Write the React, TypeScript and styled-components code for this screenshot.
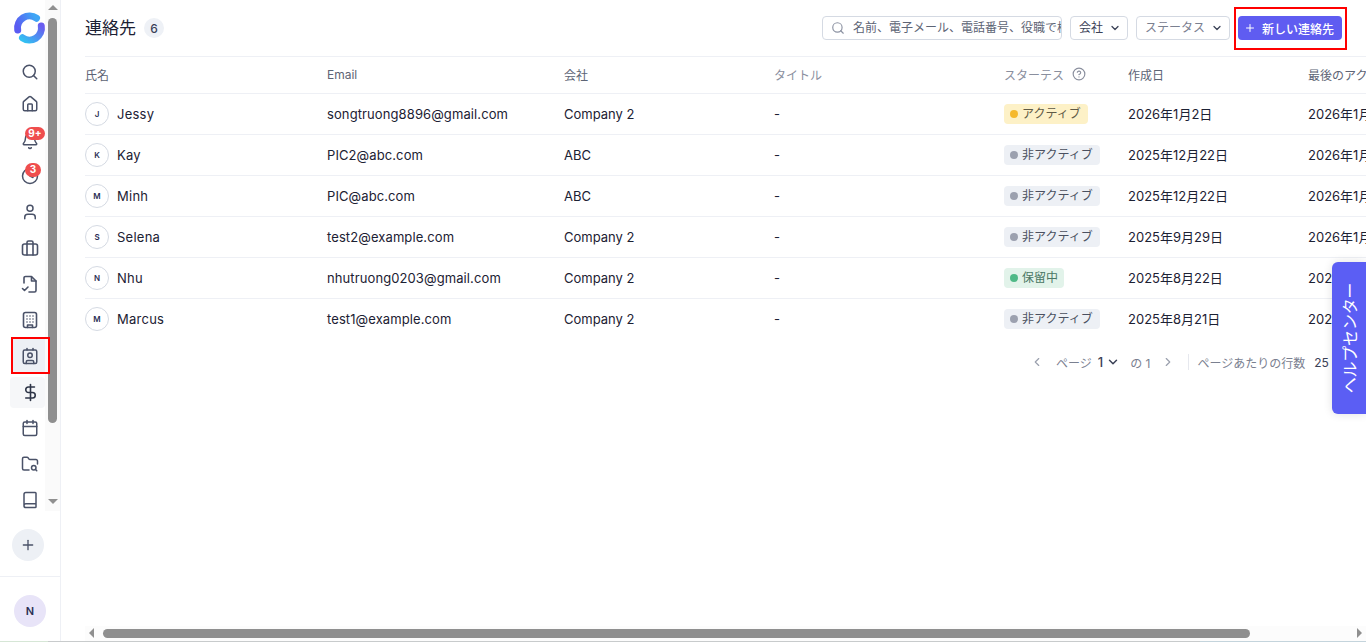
import React from "react";
import styled, { createGlobalStyle } from "styled-components";
import { Search, House, Bell, Clock, User, Calendar, FolderSearch, Book, Plus, DollarSign, Contact, ChevronDown, ChevronLeft, ChevronRight, CircleHelp } from "lucide-react";

const Global = createGlobalStyle`
  html, body { margin: 0; padding: 0; height: 100%; overflow: hidden; background: #fff; }
  body { font-family: Inter, "Noto Sans CJK JP", sans-serif; color: #1c2133; }
  * { box-sizing: border-box; }
`;

const Page = styled.div`
  position: relative; display: flex; width: 1366px; height: 642px; overflow: hidden; background: #fff;
  &::after { content: ""; position: absolute; left: 0; right: 0; bottom: 0; height: 1px;
    background: linear-gradient(90deg, #d6e6d6 0 48px, #c8cbcc 48px 1200px, #c4d4dc 1200px); }
`;
const Sidebar = styled.aside`
  position: relative; flex: 0 0 61px; height: 100%; border-right: 1px solid #eef0f5;
  display: flex; flex-direction: column;
`;
const LogoWrap = styled.div`
  height: 56px; padding: 12px 0 0 13px;
`;
const Nav = styled.nav`
  display: flex; flex-direction: column; align-items: flex-start; height: 462px; padding-left: 12px;
`;
const NavItem = styled.div<{ $h?: number; $mt?: number; $state?: "active" | "hover" }>`
  position: relative; flex: none; width: 36px; height: ${(p) => p.$h ?? 36}px; margin-top: ${(p) => p.$mt ?? 0}px;
  display: flex; align-items: center; justify-content: center; border-radius: 4px; color: #4a5268;
  background: ${(p) => (p.$state === "active" ? "#edf0f5" : "transparent")};
  ${(p) =>
    p.$state === "active"
      ? `&::after { content: ""; position: absolute; z-index: 2; left: -1px; right: -2px; top: -1px; bottom: 0; border: 2px solid #f00; }`
      : ""}
  ${(p) =>
    p.$state === "hover"
      ? `isolation: isolate; color: #2f3648;
         &::before { content: ""; position: absolute; z-index: -1; left: -2px; right: 3px; top: 3px; bottom: 2px; border-radius: 4px; background: #f6f7f9; }`
      : ""}
`;
const CountBadge = styled.span<{ $wide?: boolean }>`
  position: absolute; left: 13px; top: ${(p) => (p.$wide ? "4px" : "5px")};
  height: ${(p) => (p.$wide ? "13px" : "14px")}; min-width: ${(p) => (p.$wide ? "20px" : "16px")};
  border-radius: 8px; background: #ef4e4e; color: #fff; font-size: 10px; font-weight: 700; line-height: 13px; text-align: center;
`;
const AddButton = styled.div`
  width: 32px; height: 32px; border-radius: 50%; background: #edf0f5; color: #4a5268;
  margin: 11px 0 0 12px; display: flex; align-items: center; justify-content: center;
`;
const Divider = styled.div`
  height: 1px; background: #eef0f5; margin-top: 15px;
`;
const UserAvatar = styled.div`
  width: 32px; height: 32px; border-radius: 50%; background: #e8e4f8; color: #2b2f55;
  margin: 18px 0 0 14px; display: flex; align-items: center; justify-content: center; font-size: 11px; font-weight: 600;
`;
const VTrack = styled.div`
  position: absolute; left: 45px; top: 0; width: 15px; height: 511px; background: #fafafa;
`;
const VThumb = styled.div`
  position: absolute; left: 3px; top: 18px; width: 9px; height: 405px; border-radius: 5px; background: #8f8f8f;
`;
const ArrowUp = styled.div`
  position: absolute; left: 3px; top: 5px; border: 5px solid transparent; border-top: 0; border-bottom: 5px solid #8f8f8f;
`;
const ArrowDown = styled.div`
  position: absolute; left: 3px; top: 499px; border: 5px solid transparent; border-bottom: 0; border-top: 5px solid #8f8f8f;
`;
const Main = styled.main`
  flex: 1; min-width: 0; padding-left: 24px; overflow: hidden;
`;
const Header = styled.header`
  height: 57px; border-bottom: 1px solid #eef0f5; display: flex; align-items: center; padding-right: 24px; width: 1281px;
`;
const Title = styled.h1`
  margin: 0; font-size: 17px; font-weight: 400; line-height: 24px; color: #1c2133;
`;
const CountPill = styled.span`
  margin-left: 8px; width: 20px; height: 20px; border-radius: 50%; background: #eef1f6; color: #3a4156;
  font-size: 12px; font-weight: 500; display: flex; align-items: center; justify-content: center;
`;
const Tools = styled.div`
  margin-left: auto; display: flex; align-items: center; gap: 8px;
`;
const SearchBox = styled.div`
  width: 240px; height: 24px; border: 1px solid #d5dae3; border-radius: 4px; display: flex; align-items: center;
  padding-left: 8px; gap: 8px; color: #8d93a3; overflow: hidden;
`;
const SearchText = styled.span`
  flex: 1; min-width: 0; white-space: nowrap; overflow: hidden; font-size: 12px; line-height: 18px; color: #5d6475;
`;
const FilterButton = styled.div<{ $w: number; $muted?: boolean }>`
  width: ${(p) => p.$w}px; height: 24px; border: 1px solid #d5dae3; border-radius: 4px; display: flex; align-items: center;
  justify-content: space-between; padding: 0 6px 0 8px; font-size: 12px; color: ${(p) => (p.$muted ? "#7a8090" : "#3a4156")};
`;
const FilterLabel = styled.span`
  line-height: 18px;
`;
const PrimaryButton = styled.div`
  position: relative; width: 104px; height: 24px; border-radius: 4px; background: #5f5cf1; color: #fff; font-size: 12px; font-weight: 500;
  display: flex; align-items: center; gap: 6px; padding-left: 6px;
  &::after { content: ""; position: absolute; left: -4px; right: -5px; top: -9px; bottom: -10px; border: 2px solid #f00; }
`;
const HeadRow = styled.div`
  display: grid; grid-template-columns: 242px 237px 210px 230px 124px 180px 200px; height: 37px; align-items: center;
  border-bottom: 1px solid #eef0f5; font-size: 12px; color: #5d6475; white-space: nowrap; width: 1281px;
`;
const HeadCell = styled.div<{ $faint?: boolean }>`
  display: flex; align-items: center; gap: 8px; padding-bottom: 2px; color: ${(p) => (p.$faint ? "#8a8f9e" : "#5d6475")};
`;
const Rows = styled.div`
  & > :last-child { border-bottom-color: transparent; }
`;
const Row = styled.div`
  display: grid; grid-template-columns: 242px 237px 210px 230px 124px 180px 200px; height: 41px; align-items: center;
  border-bottom: 1px solid #eef0f5; font-size: 13px; color: #1c2133; white-space: nowrap; width: 1281px;
`;
const NameCell = styled.div`
  display: flex; align-items: center; gap: 8px; letter-spacing: 0.25px;
`;
const Initial = styled.span`
  width: 24px; height: 24px; border-radius: 50%; border: 1px solid #d5dae3; display: flex; align-items: center; justify-content: center;
  font-size: 8px; font-weight: 600; letter-spacing: 0; color: #2b2f55;
`;
const Cell = styled.div`
  min-width: 0;
`;
const TagCell = styled.div`
  min-width: 0; display: flex; align-items: center;
`;
const EmailCell = styled.div`
  min-width: 0; letter-spacing: 0.1px;
`;
const DateCell = styled.div`
  min-width: 0; padding-bottom: 2px;
`;
const STATUS = {
  active: { bg: "#fdf1c7", dot: "#f5b92e", color: "#5f5a46" },
  inactive: { bg: "#edf0f5", dot: "#9ca1af", color: "#4a5060" },
  pending: { bg: "#e2f3ea", dot: "#4fb987", color: "#4a7764" },
};
const Tag = styled.span<{ $kind: keyof typeof STATUS }>`
  display: inline-flex; align-items: center; gap: 4px; height: 20px; padding: 0 6px 3px 6px; border-radius: 4px; font-size: 12px;
  padding-right: ${(p) => (p.$kind === "pending" ? "6px" : "7px")};
  background: ${(p) => STATUS[p.$kind].bg}; color: ${(p) => STATUS[p.$kind].color};
`;
const Dot = styled.i<{ $kind: keyof typeof STATUS }>`
  width: 8px; height: 8px; border-radius: 50%; margin-top: 3px; background: ${(p) => STATUS[p.$kind].dot};
`;
const Pager = styled.div`
  display: flex; align-items: center; height: 20px; margin: 12px 0 0 945px; font-size: 12px; color: #7a8090; white-space: nowrap;
`;
const PagerArrow = styled.span<{ $ml: number }>`
  display: flex; margin-left: ${(p) => p.$ml}px; color: #9ba0ae;
`;
const PagerText = styled.span<{ $ml: number; $strong?: boolean; $dark?: boolean }>`
  margin-left: ${(p) => p.$ml}px; color: ${(p) => (p.$strong || p.$dark ? "#3a4156" : "#7a8090")}; font-weight: ${(p) => (p.$strong ? 500 : 400)};
  font-size: ${(p) => (p.$strong ? "13px" : "12px")};
`;
const PagerSep = styled.span`
  width: 1px; height: 16px; background: #e6e8ee; margin-left: 13px;
`;
const HelpTab = styled.div`
  position: absolute; left: 1332px; top: 262px; width: 34px; height: 152px; background: #5b5ef4; color: #fff; border-radius: 6px 0 0 6px;
  box-shadow: 0 0 10px rgba(0, 0, 0, 0.12); display: flex; align-items: center; justify-content: center;
  font-size: 16px;
`;
const HelpLabel = styled.span`
  display: block; transform: rotate(-90deg); white-space: nowrap; letter-spacing: -0.2px;
`;
const HScroll = styled.div`
  position: absolute; left: 85px; top: 626px; width: 1281px; height: 15px; background: #fcfcfc;
`;
const HThumb = styled.div`
  position: absolute; left: 18px; top: 3px; width: 1147px; height: 9px; border-radius: 5px; background: #8f8f8f;
`;
const ArrowLeft = styled.div`
  position: absolute; left: 4px; top: 2px; border: 5px solid transparent; border-left: 0; border-right: 5px solid #8f8f8f;
`;
const ArrowRight = styled.div`
  position: absolute; right: 4px; top: 2px; border: 5px solid transparent; border-right: 0; border-left: 5px solid #8f8f8f;
`;

const Logo = () => (
  <svg width="34" height="34" viewBox="0 0 34 34" fill="none">
    <defs>
      <linearGradient id="lgA" x1="0" y1="0.7" x2="1" y2="0.3">
        <stop offset="0" stopColor="#5a5cf2" />
        <stop offset="1" stopColor="#3fa6f5" />
      </linearGradient>
      <linearGradient id="lgB" x1="0" y1="1" x2="1" y2="0">
        <stop offset="0" stopColor="#33c0f2" />
        <stop offset="1" stopColor="#6a5cf0" />
      </linearGradient>
    </defs>
    <path d="M4.700 18A12 12 0 0 1 23.500 6.200" stroke="url(#lgA)" strokeWidth="7" strokeLinecap="round" />
    <path d="M28.300 14A12 12 0 0 1 9.500 25.800" stroke="url(#lgB)" strokeWidth="7" strokeLinecap="round" />
  </svg>
);
const IconBase: React.FC<{ children: React.ReactNode }> = ({ children }) => (
  <svg width="20" height="20" viewBox="0 0 20 20" fill="none" stroke="currentColor" strokeWidth="1.6" strokeLinecap="round" strokeLinejoin="round">
    {children}
  </svg>
);
const BriefcaseIcon = () => (
  <IconBase>
    <rect x="2.500" y="6" width="15" height="11" rx="2" />
    <path d="M7 6V4.500A1.500 1.500 0 0 1 8.500 3h3A1.500 1.500 0 0 1 13 4.500V6M7 6v11M13 6v11" />
  </IconBase>
);
const TaskFileIcon = () => (
  <IconBase>
    <path d="M4 9V4a1.500 1.500 0 0 1 1.500-1.500H11.500L16 7v9.500A1.500 1.500 0 0 1 14.500 18H9" />
    <path d="M11.500 3v4H16M2.500 14.500l2 2 3.500-3.500" />
  </IconBase>
);
const BuildingIcon = () => (
  <IconBase>
    <rect x="3.500" y="2.500" width="13" height="15" rx="2" />
    <path d="M7 6h.01M10 6h.01M13 6h.01M7 9h.01M10 9h.01M13 9h.01M7 12h.01M10 12h.01M13 12h.01M7.500 17.500v-2.500h5v2.500" />
  </IconBase>
);

type Kind = keyof typeof STATUS;
const LABEL: Record<Kind, string> = { active: "アクティブ", inactive: "非アクティブ", pending: "保留中" };
const rows: { n: string; i: string; e: string; c: string; s: Kind; d: string; l: string }[] = [
  { n: "Jessy", i: "J", e: "songtruong8896@gmail.com", c: "Company 2", s: "active", d: "2026年1月2日", l: "2026年1月2日" },
  { n: "Kay", i: "K", e: "PIC2@abc.com", c: "ABC", s: "inactive", d: "2025年12月22日", l: "2026年1月2日" },
  { n: "Minh", i: "M", e: "PIC@abc.com", c: "ABC", s: "inactive", d: "2025年12月22日", l: "2026年1月2日" },
  { n: "Selena", i: "S", e: "test2@example.com", c: "Company 2", s: "inactive", d: "2025年9月29日", l: "2026年1月2日" },
  { n: "Nhu", i: "N", e: "nhutruong0203@gmail.com", c: "Company 2", s: "pending", d: "2025年8月22日", l: "2025年8月22日" },
  { n: "Marcus", i: "M", e: "test1@example.com", c: "Company 2", s: "inactive", d: "2025年8月21日", l: "2025年8月21日" },
];

export default function App() {
  return (
    <Page>
      <Global />
      <Sidebar>
        <LogoWrap><Logo /></LogoWrap>
        <Nav>
          <NavItem $h={32}><Search size={18} /></NavItem>
          <NavItem $h={32}><House size={18} /></NavItem>
          <NavItem $mt={3}><Bell size={18} /><CountBadge $wide>9+</CountBadge></NavItem>
          <NavItem $mt={-1}><Clock size={18} /><CountBadge>3</CountBadge></NavItem>
          <NavItem><User size={18} /></NavItem>
          <NavItem><BriefcaseIcon /></NavItem>
          <NavItem><TaskFileIcon /></NavItem>
          <NavItem><BuildingIcon /></NavItem>
          <NavItem $state="active"><Contact size={18} /></NavItem>
          <NavItem $state="hover"><DollarSign size={19} /></NavItem>
          <NavItem><Calendar size={18} /></NavItem>
          <NavItem><FolderSearch size={18} /></NavItem>
          <NavItem><Book size={18} /></NavItem>
        </Nav>
        <AddButton><Plus size={16} /></AddButton>
        <Divider />
        <UserAvatar>N</UserAvatar>
        <VTrack>
          <ArrowUp />
          <VThumb />
          <ArrowDown />
        </VTrack>
      </Sidebar>
      <Main>
        <Header>
          <Title>連絡先</Title>
          <CountPill>6</CountPill>
          <Tools>
            <SearchBox>
              <Search size={14} />
              <SearchText>名前、電子メール、電話番号、役職で検索</SearchText>
            </SearchBox>
            <FilterButton $w={58}><FilterLabel>会社</FilterLabel><ChevronDown size={12} strokeWidth={2.5} color="#3a4156" /></FilterButton>
            <FilterButton $w={94} $muted><FilterLabel>ステータス</FilterLabel><ChevronDown size={12} strokeWidth={2.5} color="#3a4156" /></FilterButton>
            <PrimaryButton><Plus size={12} />新しい連絡先</PrimaryButton>
          </Tools>
        </Header>
        <HeadRow>
          <HeadCell>氏名</HeadCell>
          <HeadCell>Email</HeadCell>
          <HeadCell>会社</HeadCell>
          <HeadCell $faint>タイトル</HeadCell>
          <HeadCell $faint>スターテス<CircleHelp size={14} /></HeadCell>
          <HeadCell>作成日</HeadCell>
          <HeadCell>最後のアクティビティ</HeadCell>
        </HeadRow>
        <Rows>
          {rows.map((r) => (
            <Row key={r.e}>
              <NameCell><Initial>{r.i}</Initial>{r.n}</NameCell>
              <EmailCell>{r.e}</EmailCell>
              <Cell>{r.c}</Cell>
              <Cell>-</Cell>
              <TagCell><Tag $kind={r.s}><Dot $kind={r.s} />{LABEL[r.s]}</Tag></TagCell>
              <DateCell>{r.d}</DateCell>
              <DateCell>{r.l}</DateCell>
            </Row>
          ))}
        </Rows>
        <Pager>
          <PagerArrow $ml={0}><ChevronLeft size={14} /></PagerArrow>
          <PagerText $ml={12}>ページ</PagerText>
          <PagerText $ml={6} $strong>1</PagerText>
          <PagerArrow $ml={3}><ChevronDown size={14} strokeWidth={2.5} color="#3a4156" /></PagerArrow>
          <PagerText $ml={10}>の 1</PagerText>
          <PagerArrow $ml={11}><ChevronRight size={14} /></PagerArrow>
          <PagerSep />
          <PagerText $ml={8}>ページあたりの行数</PagerText>
          <PagerText $ml={9} $dark>25</PagerText>
        </Pager>
      </Main>
      <HelpTab><HelpLabel>ヘルプセンター</HelpLabel></HelpTab>
      <HScroll><ArrowLeft /><HThumb /><ArrowRight /></HScroll>
    </Page>
  );
}
